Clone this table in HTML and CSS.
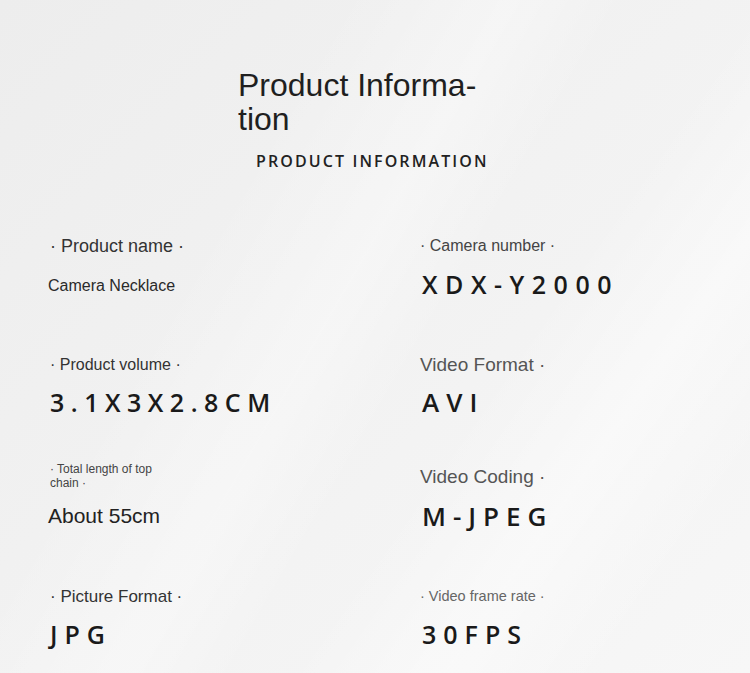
FILE: index.html
```html
<!DOCTYPE html>
<html>
<head>
<meta charset="utf-8">
<link rel="stylesheet" href="styles.css">
</head>
<body>
<div class="page">
  <header class="head">
    <h1 class="title">Product Informa-<br>tion</h1>
    <div class="subtitle">PRODUCT INFORMATION</div>
  </header>
  <section class="specs">
    <div class="row r1">
      <div class="cell">
        <div class="label l18 c3">· Product name ·</div>
        <div class="text16 mt23">Camera Necklace</div>
      </div>
      <div class="cell right">
        <div class="label l16 c4">· Camera number ·</div>
        <div class="value wide mt18">XDX-Y2000</div>
      </div>
    </div>
    <div class="row r2">
      <div class="cell">
        <div class="label l16 c3 mt2">· Product volume ·</div>
        <div class="value tight mt17">3.1X3X2.8CM</div>
      </div>
      <div class="cell right">
        <div class="label l19 c5">Video Format ·</div>
        <div class="value v26 mt15">AVI</div>
      </div>
    </div>
    <div class="row r3">
      <div class="cell">
        <div class="label small c4">· Total length of top chain ·</div>
        <div class="text21 mt15">About 55cm</div>
      </div>
      <div class="cell right">
        <div class="label l19 c5 mt4">Video Coding ·</div>
        <div class="value v26 mt17">M-JPEG</div>
      </div>
    </div>
    <div class="row r4">
      <div class="cell">
        <div class="label l17 c3">· Picture Format ·</div>
        <div class="value mt17">JPG</div>
      </div>
      <div class="cell right">
        <div class="label l15 c6 mt1">· Video frame rate ·</div>
        <div class="value mt18">30FPS</div>
      </div>
    </div>
  </section>
</div>
</body>
</html>
```
FILE: styles.css
```css
html, body {
  margin: 0;
  padding: 0;
}
body {
  width: 750px;
  height: 673px;
  overflow: hidden;
  font-family: "Liberation Sans", Arial, sans-serif;
  background:
    linear-gradient(120deg, rgba(255,255,255,0) 30%, rgba(255,255,255,0.35) 45%, rgba(255,255,255,0) 55%),
    linear-gradient(125deg, rgba(255,255,255,0) 62%, rgba(255,255,255,0.45) 75%, rgba(255,255,255,0) 88%),
    linear-gradient(135deg, #ededed 0%, #f1f1f1 40%, #f4f4f4 70%, #f7f7f7 100%);
}
.page {
  padding-top: 68px;
}
.head {
  padding-left: 238px;
}
.title {
  margin: 0;
  font-weight: 400;
  font-size: 32px;
  line-height: 34px;
  color: #1f1f1f;
}
.subtitle {
  margin: 15px 0 0 18px;
  font-family: "Open Sans", sans-serif;
  font-weight: 600;
  font-size: 16px;
  line-height: 20px;
  letter-spacing: 2.1px;
  color: #222;
}
.specs {
  padding-left: 48px;
  margin-top: 67px;
}
.row {
  display: grid;
  grid-template-columns: 372px 1fr;
  align-items: start;
}
.r1 { height: 117px; }
.r2 { height: 108px; }
.r3 { height: 125px; }
.label {
  line-height: 1;
  padding-left: 2px;
}
.right .label { padding-left: 0; }
.l15 { font-size: 14.5px; }
.l16 { font-size: 16px; }
.l17 { font-size: 17px; }
.l18 { font-size: 18px; margin-top: -1px; }
.l19 { font-size: 19px; }
.small {
  font-size: 12px;
  line-height: 13.5px;
  max-width: 112px;
}
.c3 { color: #333; }
.c4 { color: #444; }
.c5 { color: #555; }
.c6 { color: #666; }
.text16 {
  font-size: 16px;
  line-height: 1;
  color: #2a2a2a;
}
.text21 {
  font-size: 21px;
  line-height: 1;
  color: #222;
}
.value {
  font-family: "Open Sans", sans-serif;
  font-weight: 600;
  font-size: 25px;
  line-height: 1;
  letter-spacing: 7px;
  color: #1a1a1a;
  padding-left: 2px;
}
.value.wide { letter-spacing: 7.5px; }
.value.tight { letter-spacing: 6.5px; }
.v26 { font-size: 26px; }
.mt1 { margin-top: 1px; }
.mt2 { margin-top: 2px; }
.mt4 { margin-top: 4px; }
.mt15 { margin-top: 15px; }
.mt16 { margin-top: 16px; }
.mt17 { margin-top: 17px; }
.mt18 { margin-top: 18px; }
.mt21 { margin-top: 21px; }
.mt23 { margin-top: 23px; }
```
